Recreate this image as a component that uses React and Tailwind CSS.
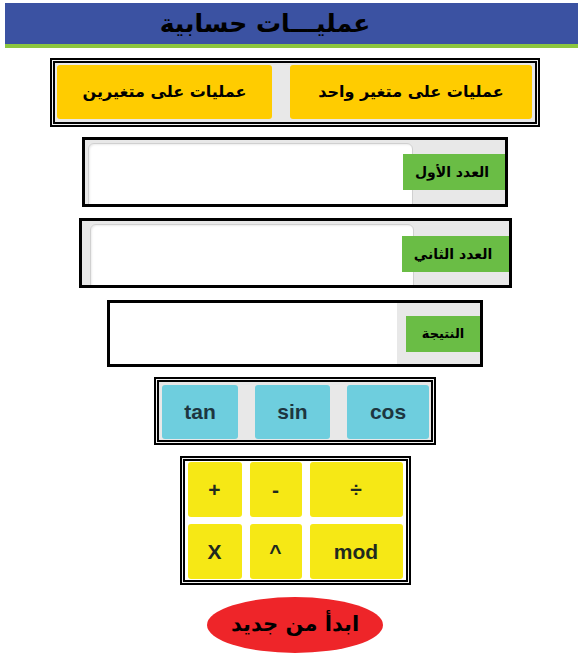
const arabic = "font-['DejaVu_Sans',sans-serif]";
const latin = "font-['Liberation_Sans',Arial,sans-serif]";

function DoubleBox({ outerClass, innerClass, children, dir }) {
  return (
    <div dir={dir} className={`flex border-2 border-black p-px bg-[#f4f4f4] ${outerClass}`}>
      <div className={`flex-1 border-2 border-black ${innerClass}`}>{children}</div>
    </div>
  );
}

function NumberField({ label, boxClass, inputClass, labelClass }) {
  return (
    <div dir="rtl" className={`flex items-start overflow-hidden border-[3px] border-black bg-[#e8e8e8] ${boxClass}`}>
      <div className={`relative z-10 flex items-center justify-center bg-[#6abd45] font-bold text-black ${arabic} ${labelClass}`}>
        {label}
      </div>
      <div className={`bg-white border border-[#d0d0d0] shadow-[inset_1px_1px_2px_rgba(0,0,0,0.08)] ${inputClass}`} />
    </div>
  );
}

export default function App() {
  const trig = [
    { name: 'tan', w: 'w-[76px]' },
    { name: 'sin', w: 'w-[75px]' },
    { name: 'cos', w: 'w-[82px]' },
  ];
  const ops = ['+', '-', '÷', 'X', '^', 'mod'];

  return (
    <div className="w-[578px] h-[656px] bg-white pt-[3px] overflow-hidden">
      {/* Header */}
      <div className="ml-[5px]">
        <div className="h-[41px] bg-[#3b52a2] flex items-center justify-center pr-[53px]">
          <h1 dir="rtl" className={`text-[25px] font-bold text-black leading-none ${arabic}`}>
            عمليـــات حسابية
          </h1>
        </div>
        <div className="h-[4px] bg-[#8cc63f]" />
      </div>

      <div className="flex flex-col items-center pl-[12px]">
        {/* Mode switch */}
        <DoubleBox
          dir="rtl"
          outerClass="mt-[10px] w-[490px] h-[69px]"
          innerClass="bg-[#e8e8e8] flex items-start pt-[2px] pr-[3px] gap-[18px]"
        >
          <button className={`w-[242px] h-[54px] rounded-[3px] bg-[#ffcc00] text-[16px] font-bold text-black ${arabic}`}>
            عمليات على متغير واحد
          </button>
          <button className={`w-[215px] h-[54px] rounded-[3px] bg-[#ffcc00] text-[16px] font-bold text-black ${arabic}`}>
            عمليات على متغيرين
          </button>
        </DoubleBox>

        {/* First number */}
        <div className="mt-[10px]">
          <NumberField
            label="العدد الأول"
            boxClass="w-[426px] h-[70px]"
            labelClass="w-[102px] h-[36px] mt-[14px] text-[14px] pr-[4px]"
            inputClass="w-[325px] h-[80px] mt-[3px] -mr-[10px] rounded-t-[6px]"
          />
        </div>

        {/* Second number */}
        <div className="mt-[11px]">
          <NumberField
            label="العدد الثاني"
            boxClass="w-[433px] h-[70px]"
            labelClass="w-[107px] h-[36px] mt-[15px] text-[14px] pr-[4px]"
            inputClass="w-[324px] h-[80px] mt-[3px] -mr-[12px] rounded-t-[6px]"
          />
        </div>

        {/* Result */}
        <div dir="rtl" className="mt-[12px] w-[376px] h-[67px] border-[3px] border-black bg-[#e8e8e8] flex items-stretch">
          <div className="w-[83px] flex items-center justify-start">
            <div className={`w-[74px] h-[36px] bg-[#6abd45] flex items-center justify-center text-[13px] font-bold text-black ${arabic}`}>
              النتيجة
            </div>
          </div>
          <div className="flex-1 bg-white" />
        </div>

        {/* Trig functions */}
        <DoubleBox
          outerClass="mt-[10px] w-[282px] h-[68px]"
          innerClass="bg-[#e8e8e8] flex items-start pt-[3px] pl-[3px] gap-[17px]"
        >
          {trig.map((t) => (
            <button
              key={t.name}
              className={`${t.w} h-[54px] rounded-[3px] bg-[#6ecede] text-[21px] font-bold text-[#1d3640] ${latin}`}
            >
              {t.name}
            </button>
          ))}
        </DoubleBox>

        {/* Operators */}
        <DoubleBox
          outerClass="mt-[11px] w-[231px] h-[129px]"
          innerClass="bg-white pt-[1px] pl-[3px]"
        >
          <div className="grid grid-cols-[54px_52px_93px] gap-x-[8px] gap-y-[7px]">
            {ops.map((op) => (
              <button
                key={op}
                className={`h-[55px] rounded-[3px] bg-[#f6e815] text-[21px] font-bold text-[#1f2a1f] ${latin}`}
              >
                {op}
              </button>
            ))}
          </div>
        </DoubleBox>

        {/* Reset */}
        <button
          dir="rtl"
          className={`mt-[12px] w-[176px] h-[56px] rounded-[50%] bg-[#ee2529] text-[21px] font-bold text-black ${arabic}`}
        >
          ابدأ من جديد
        </button>
      </div>
    </div>
  );
}
